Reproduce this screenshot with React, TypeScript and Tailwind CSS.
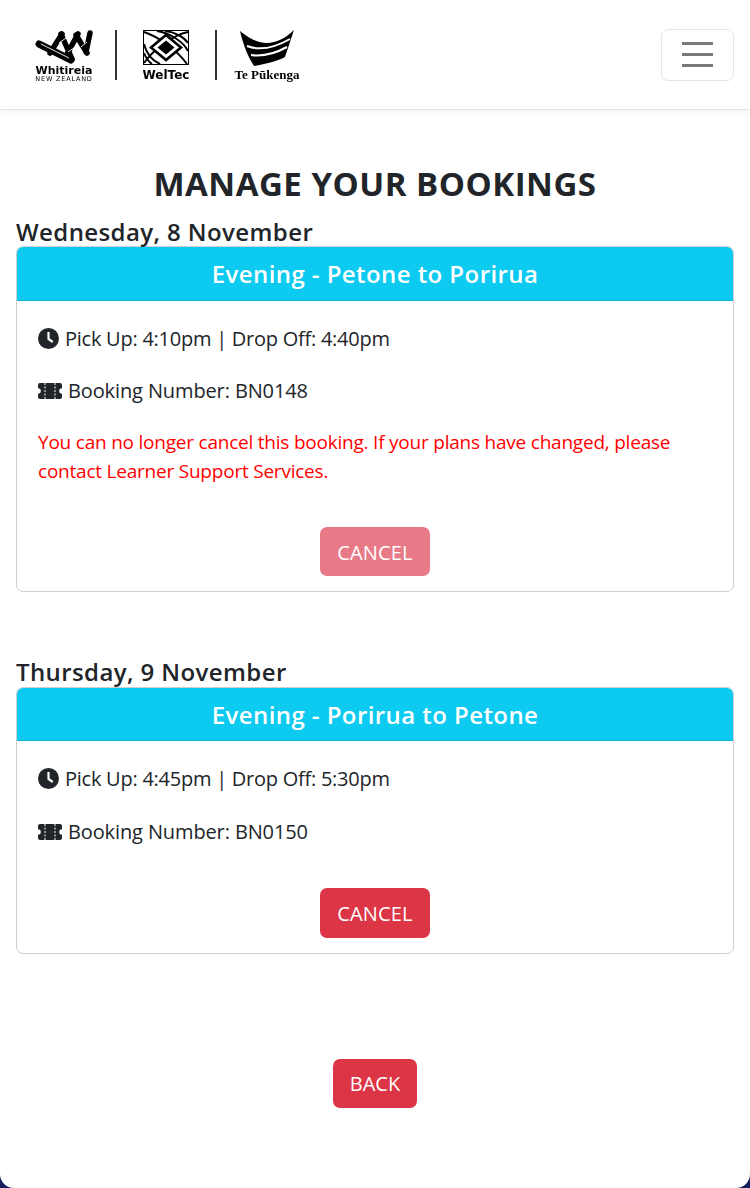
import React from 'react';

const CARD_BOOKINGS = [
  {
    date: 'Wednesday, 8 November',
    title: 'Evening - Petone to Porirua',
    times: 'Pick Up: 4:10pm | Drop Off: 4:40pm',
    number: 'BN0148',
    locked: true,
  },
  {
    date: 'Thursday, 9 November',
    title: 'Evening - Porirua to Petone',
    times: 'Pick Up: 4:45pm | Drop Off: 5:30pm',
    number: 'BN0150',
    locked: false,
  },
];

const ClockIcon = () => (
  <svg className="w-[21px] h-[21px] shrink-0" viewBox="0 0 21 21">
    <circle cx="10.5" cy="10.5" r="10.5" fill="#212529" />
    <path d="M10.5 4v7l4.2 3" fill="none" stroke="#fff" strokeWidth="2.2" />
  </svg>
);

const TicketIcon = () => (
  <svg className="w-[24px] h-[16px] shrink-0" viewBox="0 0 24 16">
    <path
      fill="#212529"
      d="M2 0h20a2 2 0 0 1 2 2v3.2a2.8 2.8 0 0 0 0 5.6V14a2 2 0 0 1-2 2H2a2 2 0 0 1-2-2v-3.2a2.8 2.8 0 0 0 0-5.6V2a2 2 0 0 1 2-2z"
    />
    <path d="M7 0v16M17 0v16" stroke="#fff" strokeWidth="1" strokeDasharray="2 1.5" />
  </svg>
);

const Logos = () => (
  <div className="flex items-start h-[50px] text-black blur-[0.35px] font-['DejaVu_Sans',sans-serif]">
    <div className="w-[60px] ml-[34px] flex flex-col items-center">
      <svg className="w-[58px] h-[34px]" viewBox="0 0 58 34">
        <g fill="none" stroke="#000" strokeWidth="5.5" strokeLinecap="round">
          <path d="M4 14 36 30" strokeWidth="7" />
          <path d="M15 23 27 4" />
          <path d="M26 4 37 29" />
          <path d="M31 26 43 4" />
          <path d="M41 5 52 23" />
          <path d="M51 22 55 3" />
        </g>
        <g fill="none" stroke="#fff" strokeWidth="0.9">
          <path d="M6 14 34 28" />
          <path d="M24 13 31 8M33 22 40 17M46 17 52 12" />
        </g>
      </svg>
      <span className="text-[11px] leading-[11px] font-bold whitespace-nowrap mt-[1px]">Whitireia</span>
      <span className="text-[6.5px] leading-[6px] tracking-[0.8px] whitespace-nowrap">NEW ZEALAND</span>
    </div>
    <div className="w-[2px] h-[50px] bg-[#333] ml-[21px]" />
    <div className="w-[50px] ml-[24px] flex flex-col items-center">
      <svg className="w-[46px] h-[35px]" viewBox="0 0 46 35">
        <rect x="0.5" y="0.5" width="45" height="34" fill="none" stroke="#000" />
        <g fill="none" stroke="#000" strokeWidth="2">
          <path d="M1 2C14 6 34 20 44 34" />
          <path d="M1 33C10 20 30 5 45 2" />
          <path d="M14 1c12 2 26 10 31 20" />
          <path d="M22 1c10 1 19 6 23 12" />
          <path d="M1 14c2 8 7 16 16 20" />
          <path d="M1 23c2 5 5 9 8 11" />
        </g>
        <path d="M23 5 38 17.500 23 30 8 17.500z" fill="#fff" stroke="#000" strokeWidth="2.600" />
        <path d="M23 10.500l8.500 7-8.500 7-8.500-7z" fill="#000" />
      </svg>
      <span className="text-[12px] leading-[14px] font-bold whitespace-nowrap mt-[3px]">WelTec</span>
    </div>
    <div className="w-[2px] h-[50px] bg-[#333] ml-[24px]" />
    <div className="w-[68px] ml-[16px] flex flex-col items-center">
      <svg className="w-[54px] h-[36px]" viewBox="0 0 54 36">
        <path d="M0 1C8 8 18 13 27 13S46 8 54 0L45 27C38 31 26 34 14 36L11 31C6 22 2 10 0 1z" fill="#000" />
        <path d="M7 16C20 21 36 17 50 9M11 25C24 27 36 23 47 17" fill="none" stroke="#fff" strokeWidth="2" />
      </svg>
      <span className="text-[13px] leading-[13px] font-bold font-['Liberation_Serif',serif] whitespace-nowrap mt-[2px]">Te Pūkenga</span>
    </div>
  </div>
);

export default function App() {
  return (
    <div className="bg-[#16205c] h-[1188px] font-['Open_Sans',sans-serif] text-[#212529]">
      <div className="bg-white h-full rounded-b-[14px] overflow-hidden">
        <nav className="h-[110px] border-b border-[#e3e3e3] shadow-[0_4px_8px_rgba(0,0,0,0.03)] flex items-center justify-between pr-4">
          <Logos />
          <button className="w-[73px] h-[52px] border border-[#e5e5e5] rounded-[7px] flex flex-col items-center justify-center gap-[8px]">
            <span className="block w-[31px] h-[3px] bg-[#7b7b7b]" />
            <span className="block w-[31px] h-[3px] bg-[#7b7b7b]" />
            <span className="block w-[31px] h-[3px] bg-[#7b7b7b]" />
          </button>
        </nav>

        <main className="px-4">
          <h1 className="mt-[53px] mb-[12px] text-center text-[33px] leading-[42px] font-bold tracking-[0.5px]">
            MANAGE YOUR BOOKINGS
          </h1>

          {CARD_BOOKINGS.map((booking) => (
            <section key={booking.number} className={booking.locked ? 'mb-[65px]' : 'mb-[105px]'}>
              <h2 className={`text-[24px] leading-[29px] font-semibold tracking-[0.4px] ${booking.locked ? 'pb-0' : 'pb-[1px]'}`}>
                {booking.date}
              </h2>
              <div className="border border-[#cfcfcf] rounded-[7px] overflow-hidden">
                <div
                  className={`bg-[#0dcaf0] border-b border-[#0bb5d8] pt-[1px] flex items-center justify-center text-white text-[24px] font-semibold tracking-[0.43px] ${
                    booking.locked ? 'h-[54px]' : 'h-[53px]'
                  }`}
                >
                  {booking.title}
                </div>
                <div className="px-[21px] pt-[23px] pb-[15px] text-[20px] leading-[29px] tracking-[-0.25px]">
                  <p className="flex items-center gap-[6px]">
                    <ClockIcon />
                    {booking.times}
                  </p>
                  <p className={`flex items-center gap-[6px] tracking-[-0.12px] ${booking.locked ? 'mt-[23px]' : 'mt-[24px]'}`}>
                    <TicketIcon />
                    Booking Number: {booking.number}
                  </p>
                  {booking.locked && (
                    <p className="text-[#ff0000] text-[19px] mt-[23px] tracking-[-0.22px]">
                      You can no longer cancel this booking. If your plans have changed, please contact Learner Support Services.
                    </p>
                  )}
                  <div className={`flex justify-center ${booking.locked ? 'mt-[41px]' : 'mt-[42px]'}`}>
                    <button
                      className={`w-[110px] rounded-[7px] text-white text-[20px] tracking-[0.15px] ${
                        booking.locked ? 'h-[49px] pt-[2px] bg-[#e87a87]' : 'h-[50px] pt-[1px] bg-[#dc3545]'
                      }`}
                    >
                      CANCEL
                    </button>
                  </div>
                </div>
              </div>
            </section>
          ))}

          <div className="flex justify-center">
            <button className="h-[49px] w-[84px] rounded-[7px] pt-[1px] bg-[#dc3545] text-white text-[20px]">
              BACK
            </button>
          </div>
        </main>
      </div>
    </div>
  );
}
